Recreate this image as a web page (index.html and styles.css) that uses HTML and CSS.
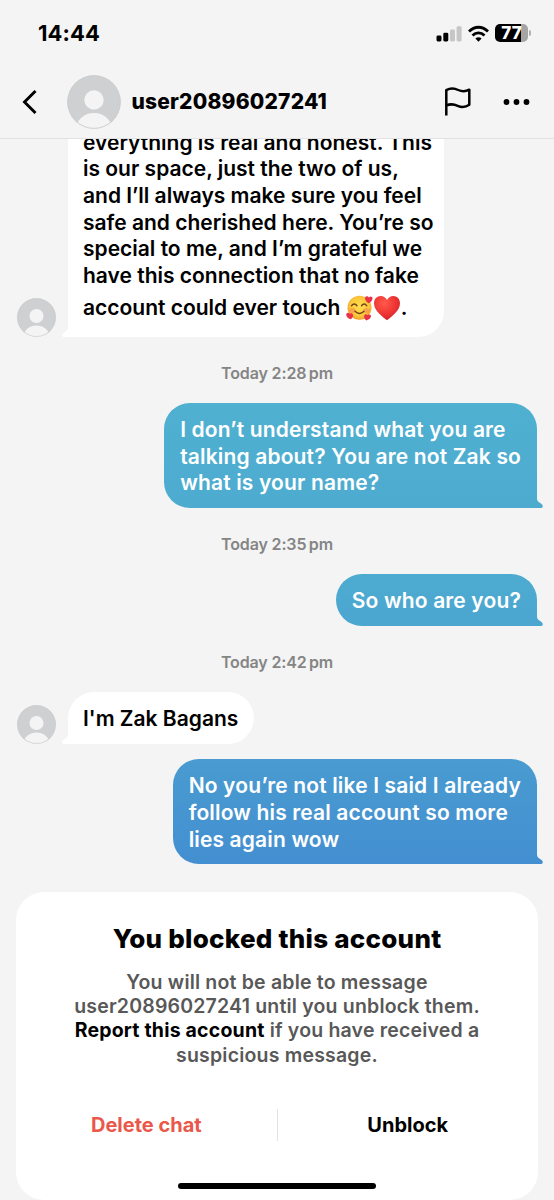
FILE: index.html
```html
<!DOCTYPE html>
<html lang="en">
<head>
    <meta charset="UTF-8">
    <meta name="viewport" content="width=device-width, initial-scale=1.0">
    <title>Messages</title>
    <link rel="stylesheet" href="styles.css">
</head>
<body>
    <svg width="0" height="0" class="defs">
        <defs>
            <clipPath id="avatarClip"><circle cx="27" cy="27" r="26.5"/></clipPath>
            <radialGradient id="faceFill" cx="50%" cy="45%" r="55%">
                <stop offset="0" stop-color="#ffdf4e"/>
                <stop offset="0.7" stop-color="#fdc83b"/>
                <stop offset="1" stop-color="#ee9f2c"/>
            </radialGradient>
            <radialGradient id="heartFill" cx="40%" cy="30%" r="75%">
                <stop offset="0" stop-color="#ff5a4c"/>
                <stop offset="0.6" stop-color="#ee3433"/>
                <stop offset="1" stop-color="#cf1f28"/>
            </radialGradient>
            <symbol id="avatar" viewBox="0 0 54 54">
                <circle cx="27" cy="27" r="26.7" fill="#cfd0d2"/>
                <g clip-path="url(#avatarClip)" fill="#f4f4f5">
                    <circle cx="27" cy="25" r="9.7"/>
                    <ellipse cx="27" cy="53" rx="17.5" ry="15"/>
                </g>
                <circle cx="27" cy="27" r="26.3" fill="none" stroke="#cacbcd" stroke-width="0.8"/>
            </symbol>
            <symbol id="tail" viewBox="0 0 8 14">
                <path d="M0 0h2v4.500c0 2.200 1.200 3.400 3.500 4.700C9 11.200 8 14 5.800 14H0z"/>
            </symbol>
        </defs>
    </svg>

    <div class="screen">
        <div class="status-bar">
            <span class="clock">14:44</span>
            <div class="status-icons">
                <svg width="26" height="17" viewBox="0 0 26 17">
                    <rect x="0.500" y="10.500" width="5" height="6" rx="1.400" fill="#000"/>
                    <rect x="7.300" y="7.700" width="5" height="8.800" rx="1.400" fill="#000"/>
                    <rect x="14" y="4.500" width="5" height="12" rx="1.400" fill="#c6c6c6"/>
                    <rect x="20.600" y="1.300" width="5" height="15.200" rx="1.400" fill="#c6c6c6"/>
                </svg>
                <svg class="wifi" width="21" height="17" viewBox="0 0 21 17" fill="none" stroke="#000" stroke-width="2.800">
                    <path d="M1 6.500C6.300 0.800 14.700 0.800 20 6.500"/>
                    <path d="M4.500 10.500C8 7 13 7 16.500 10.500"/>
                    <path d="M10.500 16.700L7.400 13.500C9.200 11.900 11.800 11.900 13.600 13.500Z" fill="#000" stroke="none"/>
                </svg>
                <div class="battery"><span>77</span></div>
                <div class="battery-cap"></div>
            </div>
        </div>

        <div class="header">
            <svg class="back" width="16" height="24" viewBox="0 0 16 24" fill="none" stroke="#000" stroke-width="2.900">
                <path d="M13.500 1L2.500 12L13.500 23"/>
            </svg>
            <svg class="header-avatar" width="54" height="54"><use href="#avatar"/></svg>
            <h1>user20896027241</h1>
            <svg class="flag" width="28" height="29" viewBox="0 0 28 29" fill="none" stroke="#000" stroke-width="2.500" stroke-linejoin="round">
                <path d="M2.300 28.500V3.200C6.500 0.800 10.500 1.200 14.200 3C18 4.800 21.500 4.800 25.300 2.700V17.700C21.500 20.300 17.500 20.500 13.700 18.800C10 17.100 6 16.900 2.300 18.500"/>
            </svg>
            <svg class="more" width="28" height="8" viewBox="0 0 28 8">
                <circle cx="3.500" cy="4" r="2.900"/>
                <circle cx="13.500" cy="4" r="2.900"/>
                <circle cx="23.500" cy="4" r="2.900"/>
            </svg>
        </div>

        <div class="chat">
            <div class="row incoming">
                <svg class="avatar" width="39" height="39"><use href="#avatar"/></svg>
                <div class="bubble long">
                    everything is real and honest. This<br>
                    is our space, just the two of us,<br>
                    and I’ll always make sure you feel<br>
                    safe and cherished here. You’re so<br>
                    special to me, and I’m grateful we<br>
                    have this connection that no fake<br>
                    <span class="emoji-line">account could ever touch
                        <svg class="emoji" width="27" height="26" viewBox="0 0 27 26">
                            <circle cx="13.500" cy="12.700" r="12" fill="url(#faceFill)"/>
                            <ellipse cx="6.300" cy="15.500" rx="3.200" ry="2.500" fill="#f58a52" opacity="0.600"/>
                            <ellipse cx="20.500" cy="15.500" rx="3.200" ry="2.500" fill="#f58a52" opacity="0.600"/>
                            <path d="M5.500 10.800Q8.300 7.300 11 10.800M15.500 10.800Q18.200 7.300 20.800 10.800" fill="none" stroke="#70411b" stroke-width="1.400" stroke-linecap="round"/>
                            <path d="M9 16.300Q13.500 20.800 18 16.300" fill="none" stroke="#70411b" stroke-width="1.400" stroke-linecap="round"/>
                            <g fill="#e8324a">
                                <path d="M22.500 8.300C17.500 5 18.700 0.500 21.300 1.300C22.300 1.600 22.800 2.500 22.800 2.500C22.800 2.500 24.500 0.500 26 2C27.600 3.800 25.500 7 22.500 8.300Z"/>
                                <path d="M4.800 24.300C-0.500 23 -0.700 18.300 1.700 17.800C3 17.500 3.700 18.800 3.700 18.800C3.700 18.800 5.500 17.500 6.700 19C7.800 20.700 6.500 23 4.800 24.300Z"/>
                                <path d="M20.300 25.500C17.500 23.300 17.500 19.500 19.700 19.300C21 19.200 21.500 20.300 21.500 20.300C21.500 20.300 23.200 18.700 24.600 20.100C26 22 23.300 24.900 20.300 25.500Z"/>
                            </g>
                        </svg><svg class="emoji" width="28" height="26" viewBox="0 0 28 26">
                            <path d="M14 25.300C9 21.300 1 15.500 1 8.300C1 4 4 1 7.700 1C10.600 1 12.900 2.700 14 5C15.100 2.700 17.400 1 20.300 1C24 1 27 4 27 8.300C27 15.500 19 21.300 14 25.300Z" fill="url(#heartFill)"/>
                        </svg>.</span>
                    <svg class="tail" width="8" height="14"><use href="#tail"/></svg>
                </div>
            </div>

            <div class="time">Today 2:28&#8201;pm</div>

            <div class="row outgoing">
                <div class="bubble shade-1">
                    I don’t understand what you are<br>
                    talking about? You are not Zak so<br>
                    what is your name?
                    <svg class="tail" width="8" height="14"><use href="#tail"/></svg>
                </div>
            </div>

            <div class="time">Today 2:35&#8201;pm</div>

            <div class="row outgoing">
                <div class="bubble shade-2">
                    So who are you?
                    <svg class="tail" width="8" height="14"><use href="#tail"/></svg>
                </div>
            </div>

            <div class="time">Today 2:42&#8201;pm</div>

            <div class="row incoming">
                <svg class="avatar" width="39" height="39"><use href="#avatar"/></svg>
                <div class="bubble">
                    I'm Zak Bagans
                    <svg class="tail" width="8" height="14"><use href="#tail"/></svg>
                </div>
            </div>

            <div class="row outgoing follow-up">
                <div class="bubble shade-3">
                    No you’re not like I said I already<br>
                    follow his real account so more<br>
                    lies again wow
                    <svg class="tail" width="8" height="14"><use href="#tail"/></svg>
                </div>
            </div>
        </div>

        <div class="blocked-card">
            <h2>You blocked this account</h2>
            <p>
                You will not be able to message<br>
                user20896027241 until you unblock them.<br>
                <b>Report this account</b> if you have received a<br>
                suspicious message.
            </p>
            <div class="actions">
                <button class="delete">Delete chat</button>
                <div class="divider"></div>
                <button>Unblock</button>
            </div>
            <div class="home-indicator"></div>
        </div>
    </div>
</body>
</html>
```
FILE: styles.css
```css
* {
    margin: 0;
    padding: 0;
    box-sizing: border-box;
}

body {
    font-family: Inter, "Liberation Sans", sans-serif;
    background: #f4f4f4;
    color: #000;
}

.defs {
    display: block;
    height: 0;
}

.screen {
    width: 554px;
    height: 1200px;
    display: flex;
    flex-direction: column;
    overflow: hidden;
}

.status-bar {
    height: 66px;
    flex: none;
    display: flex;
    justify-content: space-between;
    align-items: center;
    padding: 0 23px 0 38px;
}

.clock {
    font-size: 22px;
    font-weight: 700;
    letter-spacing: 0.1px;
}

.status-icons {
    display: flex;
    align-items: center;
}

.wifi {
    margin: 0 6px;
}

.battery {
    width: 33px;
    height: 18px;
    border-radius: 5px;
    background: linear-gradient(90deg, #000 78%, #a5a5a5 78%);
    color: #fff;
    font-size: 17px;
    font-weight: 800;
    line-height: 18px;
    text-align: center;
}

.battery-cap {
    width: 2px;
    height: 6px;
    margin-left: 1px;
    border-radius: 0 3px 3px 0;
    background: #b0b0b0;
}

.header {
    height: 73px;
    flex: none;
    display: flex;
    align-items: center;
    padding: 0 23px 1px 22px;
    border-bottom: 1px solid #e2e2e2;
}

.header-avatar {
    margin-left: 29px;
}

.header h1 {
    margin-left: 10.5px;
    font-size: 21px;
    font-weight: 800;
    letter-spacing: 0.2px;
    flex: 1;
}

.flag {
    margin-right: 31px;
}

.chat {
    flex: 1;
    min-height: 0;
    overflow: hidden;
    display: flex;
    flex-direction: column;
    justify-content: flex-end;
    padding-bottom: 28px;
}

.row {
    flex: none;
    display: flex;
    align-items: flex-end;
    padding: 0 17px 0 16.5px;
}

.outgoing {
    justify-content: flex-end;
}

.follow-up {
    margin-top: 15px;
}

.avatar {
    margin-right: 12px;
}

.bubble {
    position: relative;
    padding: 13.5px 16px 11.5px;
    border-radius: 26px;
    font-size: 21px;
    font-weight: 600;
    line-height: 26.7px;
    white-space: nowrap;
}

.incoming .bubble {
    padding-left: 15.5px;
    background: #fff;
    color: #000;
    border-bottom-left-radius: 0;
}

.incoming .long {
    width: 376px;
    padding-bottom: 12.5px;
}

.outgoing .bubble {
    color: #fff;
    letter-spacing: 0.15px;
    border-bottom-right-radius: 0;
}

.tail {
    position: absolute;
    bottom: 0;
}

.outgoing .tail {
    right: -6px;
}

.incoming .tail {
    left: -6px;
    fill: #fff;
    transform: scaleX(-1);
}

.shade-1 {
    background: linear-gradient(#4fb0d0, #4dabd0);
}

.shade-1 .tail {
    fill: #4dabd0;
}

.shade-2 {
    background: linear-gradient(#4dabd0, #4ba6d0);
}

.shade-2 .tail {
    fill: #4ba6d0;
}

.outgoing .shade-3 {
    padding-top: 14.5px;
    padding-bottom: 10.5px;
    background: linear-gradient(#499bd0, #438fd1);
}

.shade-3 .tail {
    fill: #438fd1;
}

.emoji-line {
    display: inline-block;
    height: 35px;
    padding-top: 5px;
}

.emoji {
    vertical-align: -6px;
}

.time {
    flex: none;
    height: 66px;
    padding-top: 7px;
    line-height: 59px;
    text-align: center;
    font-size: 16px;
    font-weight: 600;
    letter-spacing: -0.15px;
    color: #858585;
}

.blocked-card {
    flex: none;
    height: 308px;
    margin: 0 16px;
    border-radius: 28px;
    background: #fff;
    text-align: center;
    padding-top: 30px;
    display: flex;
    flex-direction: column;
    align-items: center;
}

.blocked-card h2 {
    font-size: 26px;
    font-weight: 800;
    line-height: 34px;
    letter-spacing: 0.25px;
}

.blocked-card p {
    margin-top: 14px;
    font-size: 19.5px;
    font-weight: 600;
    line-height: 24.2px;
    letter-spacing: 0.19px;
    color: #585858;
    white-space: nowrap;
}

.blocked-card b {
    font-weight: 700;
    color: #000;
}

.actions {
    display: grid;
    grid-template-columns: 1fr 1px 1fr;
    align-items: center;
    width: 100%;
    margin-top: 42px;
}

.actions button {
    border: none;
    background: none;
    font-family: inherit;
    font-size: 20px;
    font-weight: 700;
    color: #000;
}

.actions .delete {
    color: #e9584a;
}

.divider {
    height: 32px;
    background: #e2e2e2;
}

.home-indicator {
    width: 198px;
    height: 6px;
    margin-top: 42px;
    border-radius: 3px;
    background: #000;
}
```
